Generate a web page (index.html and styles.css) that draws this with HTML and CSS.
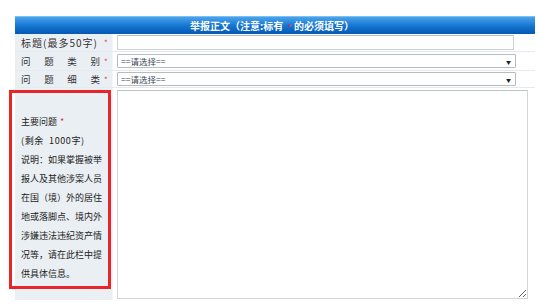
FILE: index.html
```html
<!DOCTYPE html>
<html lang="zh">
<head>
<meta charset="utf-8">
<link rel="stylesheet" href="styles.css">
</head>
<body>
<div class="form">
  <div class="head">举报正文（注意:标有 <span class="req">*</span> 的必须填写）</div>
  <div class="row r1">
    <div class="label"><span class="ltext wide">标题(最多50字)</span><span class="req">*</span></div>
    <div class="field"><div class="input"></div></div>
  </div>
  <div class="row r2">
    <div class="label"><span class="ltext spread"><span>问</span><span>题</span><span>类</span><span>别</span></span><span class="req">*</span></div>
    <div class="field"><div class="select"><span>==请选择==</span><span class="arrow">▼</span></div></div>
  </div>
  <div class="row r3">
    <div class="label"><span class="ltext spread"><span>问</span><span>题</span><span>细</span><span>类</span></span><span class="req">*</span></div>
    <div class="field"><div class="select"><span>==请选择==</span><span class="arrow">▼</span></div></div>
  </div>
  <div class="row r4">
    <div class="label big">
      <p>主要问题 <span class="req">*</span></p>
      <p class="remain">(剩余&nbsp;&nbsp;1000字)</p>
      <p>说明：如果掌握被举报人及其他涉案人员在国（境）外的居住地或落脚点、境内外涉嫌违法违纪资产情况等，请在此栏中提供具体信息。</p>
      <div class="mark"></div>
    </div>
    <div class="field top"><textarea class="area"></textarea></div>
  </div>
</div>
</body>
</html>
```

FILE: styles.css
```css
* { box-sizing: border-box; }
html, body { margin: 0; padding: 0; background: #fff; }
body {
  font-family: "Noto Sans CJK SC", "Noto Sans", sans-serif;
  color: #333;
  width: 550px;
  height: 307px;
  overflow: hidden;
}
.form {
  margin: 16px 0 0 15px;
  width: 520px;
}
.head {
  height: 18px;
  line-height: 18px;
  background: linear-gradient(#4aa3ec, #1373cf 55%, #0459b4);
  color: #fff;
  font-weight: bold;
  font-size: 10px;
  text-align: center;
  padding-right: 6px;
  border-top: 1px solid #7cc0f2;
}
.head .req { color: #e0305a; }
.row {
  display: grid;
  grid-template-columns: 98px 1fr;
  border-bottom: 1px solid #e6eaee;
}
.r1 { height: 18px; }
.r2 { height: 19px; }
.r3 { height: 17px; }
.r4 { height: 212px; border-bottom: none; }
.label {
  background: #eaeff3;
  display: flex;
  align-items: center;
  padding-left: 6px;
  font-size: 9.5px;
  color: #333;
  border-right: 1px solid #f4f6f8;
}
.ltext { width: 81px; }
.wide { font-size: 10px; letter-spacing: 1px; white-space: nowrap; }
.spread { display: flex; justify-content: space-between; padding-right: 2px; }
.req { color: #e8345a; font-size: 8px; margin-left: 2px; }
.field {
  display: flex;
  align-items: center;
  padding-left: 4px;
}
.field.top { align-items: flex-start; padding-top: 2px; }
.input {
  width: 397px;
  height: 15px;
  border: 1px solid #cfd3d6;
  border-top-color: #b9bdc0;
  background: #fff;
}
.select {
  width: 399px;
  height: 14px;
  border: 1px solid #b7bcc1;
  border-radius: 1px;
  background: #fff;
  display: flex;
  justify-content: space-between;
  align-items: center;
  padding: 0 4px 0 3px;
  font-size: 8.5px;
  color: #3a4555;
}
.arrow { font-size: 5px; color: #222; }
.area {
  display: block;
  width: 411px;
  height: 209px;
  margin: 0;
  border: 1px solid #d2d5d8;
  border-top-color: #bfc3c6;
  background: #fff;
  resize: both;
}
.big {
  position: relative;
  display: block;
  padding: 24px 8px 0 6px;
  font-size: 9px;
  line-height: 19px;
  color: #222;
}
.big p { margin: 0; }
.big .remain { letter-spacing: 0.6px; }
.big .req { font-size: 9px; margin-left: 1px; }
.mark {
  position: absolute;
  left: -6px;
  top: 2px;
  width: 102px;
  height: 199px;
  border: 3px solid #e8262a;
}
```
